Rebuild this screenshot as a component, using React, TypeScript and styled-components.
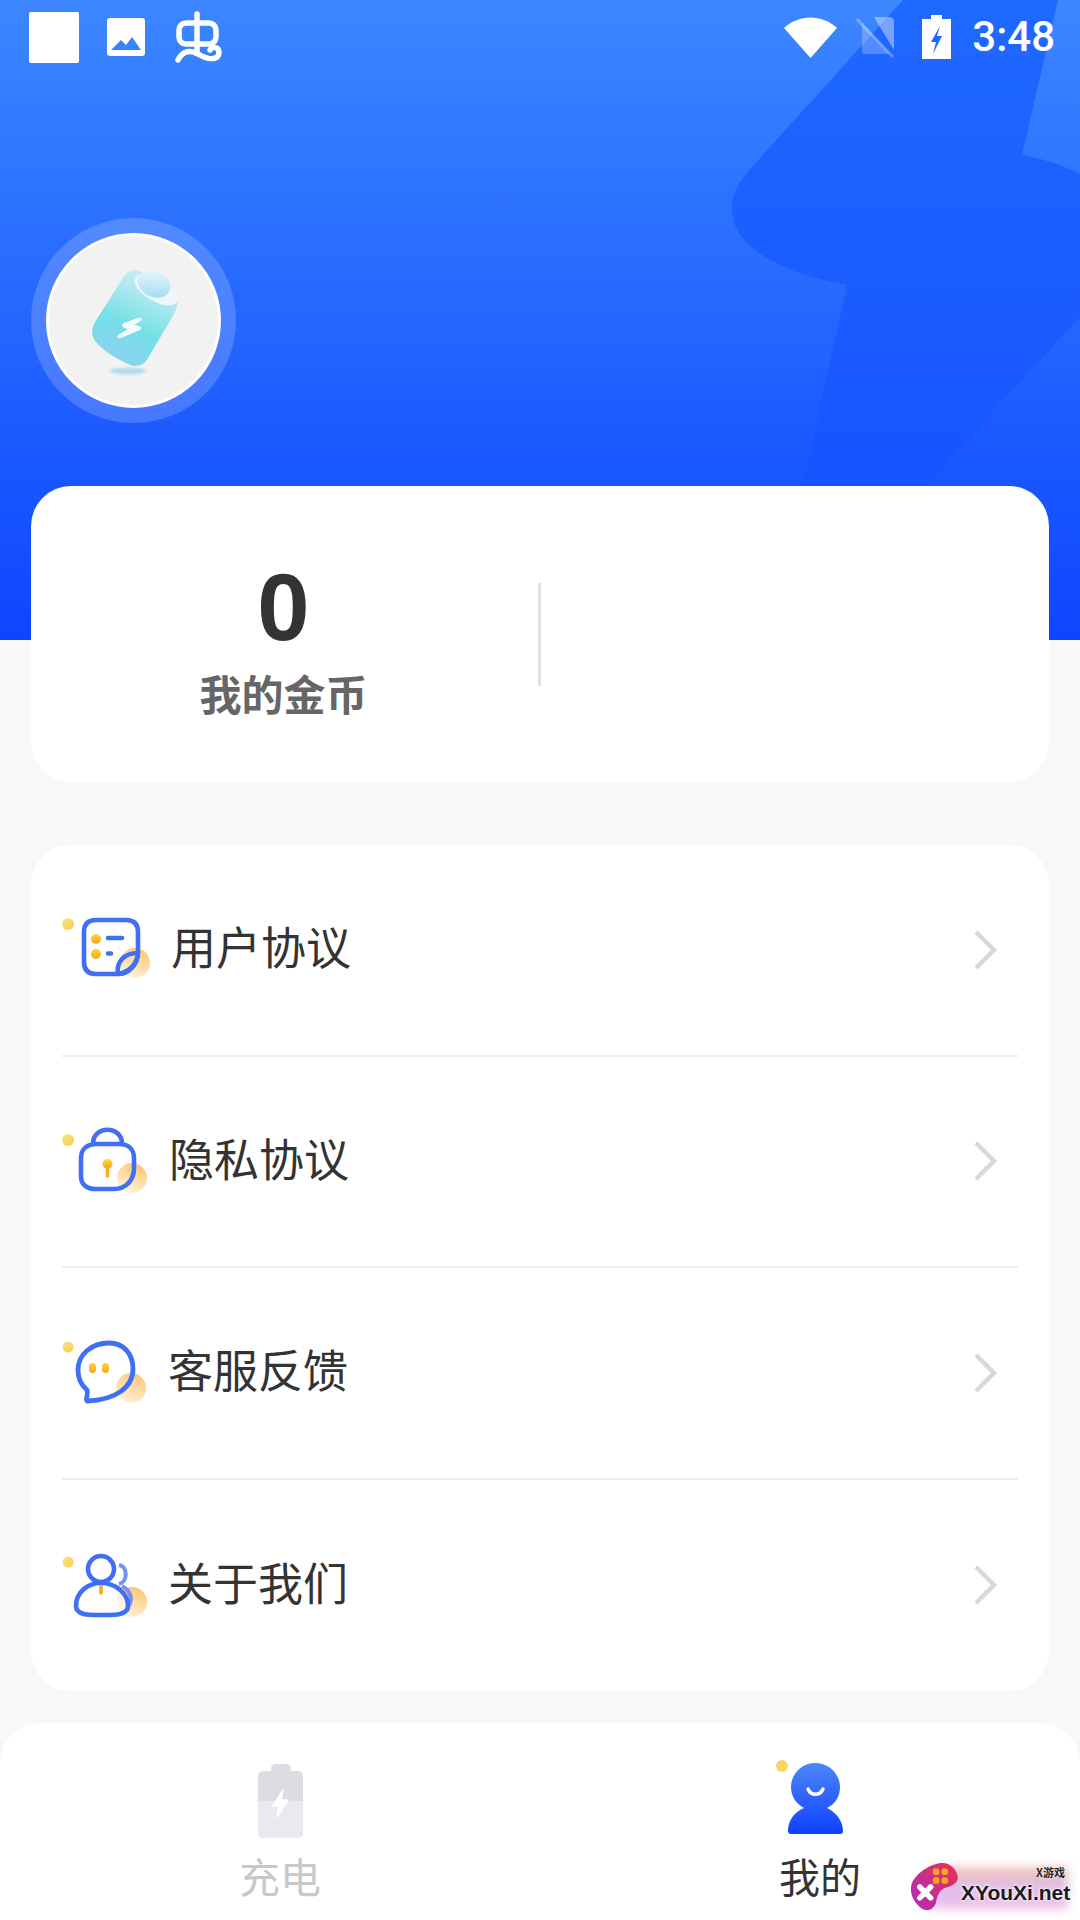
import React from 'react'
import styled, { createGlobalStyle } from 'styled-components'

const GlobalStyle = createGlobalStyle`
  html, body {
    margin: 0;
    padding: 0;
    background: #f7f8fa;
  }
  * {
    box-sizing: border-box;
  }
`

const cjk = `'Noto Sans CJK SC', 'Noto Sans', sans-serif`

const S = {
  Page: styled.div`
    position: relative;
    width: 1080px;
    height: 1920px;
    overflow: hidden;
    background: #f7f8fa;
    font-family: ${cjk};
  `,
  Hero: styled.header`
    position: relative;
    height: 640px;
    overflow: hidden;
    background: linear-gradient(180deg, #3c87ff 0%, #0e45ff 100%);
  `,
  HeroBolt: styled.svg`
    position: absolute;
    left: 0;
    top: 0;
  `,
  StatusBar: styled.div`
    position: relative;
    display: flex;
    align-items: center;
    height: 72px;
    padding: 2px 25px 0 29px;
  `,
  WhiteSquare: styled.div`
    width: 50px;
    height: 51px;
    border-radius: 2px;
    background: #fff;
    margin-right: 28px;
  `,
  StatusIcon: styled.svg<{ $after?: number }>`
    flex: none;
    margin-right: ${p => p.$after ?? 0}px;
  `,
  Spacer: styled.div`
    flex: 1;
  `,
  Clock: styled.span`
    font-family: Roboto, sans-serif;
    font-size: 42px;
    font-weight: 500;
    line-height: 1;
    color: #fff;
  `,
  AvatarRing: styled.div`
    position: relative;
    display: flex;
    align-items: center;
    justify-content: center;
    width: 205px;
    height: 205px;
    margin: 146px 0 0 31px;
    border-radius: 50%;
    background: rgba(255, 255, 255, 0.18);
  `,
  Avatar: styled.div`
    width: 175px;
    height: 175px;
    border: 3px solid #fff;
    border-radius: 50%;
    background: #f2f2f2;
    overflow: hidden;
  `,
  CoinCard: styled.section`
    position: relative;
    display: flex;
    align-items: center;
    height: 296px;
    margin: -154px 31px 0;
    border-radius: 40px;
    background: #fff;
  `,
  CoinCol: styled.div`
    display: flex;
    flex-direction: column;
    align-items: center;
    width: 505px;
    padding-top: 14px;
  `,
  CoinValue: styled.div`
    font-family: 'Liberation Sans', sans-serif;
    font-size: 94px;
    font-weight: 700;
    line-height: 94px;
    color: #333;
  `,
  CoinLabel: styled.div`
    margin-top: 10px;
    font-size: 42px;
    font-weight: 700;
    line-height: 56px;
    color: #666;
  `,
  CoinDivider: styled.div`
    width: 3px;
    height: 103px;
    margin-left: 2px;
    background: #e2e2e2;
  `,
  MenuCard: styled.section`
    margin: 63px 31px 0;
    padding: 0 31px;
    border-radius: 40px;
    background: #fff;
  `,
  MenuRow: styled.div`
    display: flex;
    align-items: center;
    height: 211.5px;
    border-bottom: 2px solid #eeeeee;

    &:last-child {
      border-bottom: 0;
    }
  `,
  MenuIcon: styled.svg`
    flex: none;
    margin-left: -12px;
  `,
  MenuText: styled.span<{ $inset: number }>`
    margin-left: ${p => p.$inset}px;
    padding-bottom: 7px;
    font-size: 45px;
    line-height: 60px;
    color: #333;
  `,
  Chevron: styled.svg`
    flex: none;
    margin-left: auto;
    margin-right: 20px;
  `,
  TabBar: styled.nav`
    display: grid;
    grid-template-columns: 560px 520px;
    height: 198px;
    margin-top: 32px;
    border-radius: 40px 40px 0 0;
    background: #fff;
  `,
  Tab: styled.div`
    display: flex;
    flex-direction: column;
    align-items: center;
    padding-top: 37px;
  `,
  TabIcon: styled.svg`
    display: block;
  `,
  TabLabel: styled.span<{ $active?: boolean }>`
    margin-top: 8px;
    font-size: 41px;
    line-height: 56px;
    color: ${p => (p.$active ? '#333' : '#c8c8c8')};
  `,
  Watermark: styled.div`
    position: absolute;
    left: 908px;
    top: 1860px;
    width: 170px;
    height: 56px;
  `,
  WatermarkGlow: styled.div`
    position: absolute;
    left: 22px;
    top: 7px;
    width: 138px;
    height: 42px;
    background: linear-gradient(180deg, #eeb6a8 0%, #d9b4ee 55%, #eeb4e0 100%);
    filter: blur(5px);
    opacity: 0.85;
  `,
  WatermarkPad: styled.svg`
    position: absolute;
    left: 2px;
    top: 2px;
  `,
  WatermarkName: styled.span`
    position: absolute;
    left: 53px;
    top: 20px;
    font-family: 'Liberation Sans', sans-serif;
    font-size: 21px;
    font-weight: 700;
    line-height: 26px;
    color: #1a1a1a;
    text-shadow: 0 0 3px #fff, 0 0 3px #fff;
  `,
  WatermarkTag: styled.span`
    position: absolute;
    left: 128px;
    top: 5px;
    font-size: 11px;
    font-weight: 700;
    line-height: 14px;
    color: #222;
    text-shadow: 0 0 2px #fff;
  `,
}

const BLUE = '#3f6ff5'
const LINE = 4.6

const Orange = () => (
  <defs>
    <linearGradient id="dot" x1="0" y1="0" x2="1" y2="1">
      <stop offset="0" stopColor="#fde68a" />
      <stop offset="1" stopColor="#f9c94e" />
    </linearGradient>
    <linearGradient id="blob" x1="0.8" y1="0" x2="0.3" y2="1">
      <stop offset="0" stopColor="#fbc56f" />
      <stop offset="1" stopColor="#fff3dd" />
    </linearGradient>
    <linearGradient id="mark" x1="0" y1="0" x2="0" y2="1">
      <stop offset="0" stopColor="#fdd33f" />
      <stop offset="1" stopColor="#f7a91d" />
    </linearGradient>
  </defs>
)

const AgreementGlyph = () => (
  <>
    <circle cx="18" cy="24" r="6" fill="url(#dot)" />
    <circle cx="85" cy="63" r="15" fill="url(#blob)" />
    <path
      d="M46 20H76C84 20 88 24 88 32V52C88 64 78 74 66 74H46C38 74 34 70 34 62V32C34 24 38 20 46 20Z"
      fill="none"
      stroke={BLUE}
      strokeWidth={LINE}
    />
    <path d="M68 74C66 62 74 53 88 53C87 66 78 74 68 74Z" fill="none" stroke={BLUE} strokeWidth={LINE} strokeLinejoin="round" />
    <circle cx="46" cy="39" r="5" fill="url(#mark)" />
    <circle cx="46" cy="54" r="5" fill="url(#mark)" />
    <path d="M58 38H72M58 53.500H61" stroke={BLUE} strokeWidth={LINE} strokeLinecap="round" />
  </>
)

const PrivacyGlyph = () => (
  <>
    <circle cx="18" cy="26" r="6" fill="url(#dot)" />
    <circle cx="82" cy="64" r="15" fill="url(#blob)" />
    <path d="M43 30C43 11 72 11 72 30" fill="none" stroke={BLUE} strokeWidth={LINE} />
    <path
      d="M47 30H69C78 30 84 35 84 44V54C84 66 76 75 64 75H46C37 75 31 71 31 62V44C31 35 37 30 47 30Z"
      fill="none"
      stroke={BLUE}
      strokeWidth={LINE}
    />
    <circle cx="57.500" cy="50" r="5" fill="url(#mark)" />
    <path d="M57.500 52V62" stroke="#f7b025" strokeWidth="3.6" strokeLinecap="round" />
  </>
)

const ServiceGlyph = () => (
  <>
    <circle cx="18" cy="22" r="5.500" fill="url(#dot)" />
    <circle cx="81" cy="63" r="15" fill="url(#blob)" />
    <path
      d="M59 18C74 18 83 29 83 44C83 62 66 75 37 76C35 73 39 69 37 65C31 60 28 53 28 45C28 29 42 18 59 18Z"
      fill="none"
      stroke={BLUE}
      strokeWidth="4.800"
      strokeLinejoin="round"
    />
    <rect x="39" y="38" width="7" height="10" rx="3.500" fill="url(#mark)" />
    <rect x="52" y="38" width="7" height="10" rx="3.500" fill="url(#mark)" />
  </>
)

const AboutGlyph = () => (
  <>
    <circle cx="18" cy="22" r="5.500" fill="url(#dot)" />
    <circle cx="82" cy="62" r="15" fill="url(#blob)" />
    <path d="M69 25C78 26 78 42 69 44" fill="none" stroke="#6f92f3" strokeWidth="4" />
    <path d="M72 46C80 50 84 60 78 66" fill="none" stroke="#6f92f3" strokeWidth="4" />
    <path d="M51 75C42 75 26 76 26 66C26 52 38 43 51 43C64 43 78 52 78 66C78 76 62 75 51 75Z" fill="#fff" fillOpacity="0.55" stroke={BLUE} strokeWidth={LINE} />
    <circle cx="51" cy="29" r="13" fill="#fff" stroke={BLUE} strokeWidth={LINE} />
    <path d="M51 47V53" stroke="#f7a91d" strokeWidth="3.6" strokeLinecap="round" />
  </>
)

const menu = [
  { label: '用户协议', inset: 1, top: 0, Glyph: AgreementGlyph },
  { label: '隐私协议', inset: -1, top: -3, Glyph: PrivacyGlyph },
  { label: '客服反馈', inset: -2, top: -2, Glyph: ServiceGlyph },
  { label: '关于我们', inset: -2, top: -5, Glyph: AboutGlyph },
]

export default function App() {
  return (
    <S.Page>
      <GlobalStyle />
      <S.Hero>
        <S.HeroBolt width="1080" height="640" viewBox="0 0 1080 640">
          <defs>
            <linearGradient id="bolt" gradientUnits="userSpaceOnUse" x1="0" y1="0" x2="0" y2="490">
              <stop offset="0" stopColor="#1f69ff" />
              <stop offset="0.55" stopColor="#1b5dff" />
              <stop offset="1" stopColor="#144cff" stopOpacity="0.3" />
            </linearGradient>
          </defs>
          <path
            d="M903 0H1058L1022 155C1050 160 1070 168 1080 175V317L957 450L900 520H795L847 285C790 275 732 250 732 210C732 190 740 180 760 158Z"
            fill="url(#bolt)"
          />
        </S.HeroBolt>
        <S.StatusBar>
          <S.WhiteSquare />
          <S.StatusIcon width="38" height="38" viewBox="0 0 38 38" $after={30}>
            <path
              fillRule="evenodd"
              d="M3 0H35C37 0 38 1 38 3V35C38 37 37 38 35 38H3C1 38 0 37 0 35V3C0 1 1 0 3 0ZM4 32H34L25 19L19 27L14 22Z"
              fill="#fff"
            />
          </S.StatusIcon>
          <S.StatusIcon width="47" height="52" viewBox="175 11 47 52">
            <g fill="none" stroke="#fff" strokeWidth="5.500" strokeLinecap="round" strokeLinejoin="round">
              <path d="M197 14V52" />
              <rect x="179" y="23" width="37" height="21" rx="7" />
              <path d="M178 60C183 50 191 50 198 54C206 59 219 62 219 52C219 47 212 46 210 50" />
            </g>
          </S.StatusIcon>
          <S.Spacer />
          <S.StatusIcon width="53" height="41" viewBox="0 0 53 41" $after={19}>
            <path d="M0 11C15 -3 38 -3 53 11L26.500 41Z" fill="#fff" />
          </S.StatusIcon>
          <S.StatusIcon width="40" height="42" viewBox="0 0 40 42" $after={26}>
            <path d="M18 1H33C36 1 38 3 38 5V34Z" fill="#fff" fillOpacity="0.4" />
            <path d="M6 7L34 38H9C7 38 6 37 6 35Z" fill="#fff" fillOpacity="0.24" />
            <path d="M1 3L37 41" stroke="#fff" strokeOpacity="0.28" strokeWidth="3" />
          </S.StatusIcon>
          <S.StatusIcon width="29" height="44" viewBox="0 0 29 44" $after={21}>
            <path
              fillRule="evenodd"
              d="M9 0H20V4H29V44H0V4H9ZM18 11L9 27H14L11 39L20 21H15Z"
              fill="#fff"
            />
          </S.StatusIcon>
          <S.Clock>3:48</S.Clock>
        </S.StatusBar>
        <S.AvatarRing>
          <S.Avatar>
            <svg width="169" height="169" viewBox="29 26 169 169">
              <defs>
                <linearGradient id="cell" x1="0.7" y1="0" x2="0.3" y2="1">
                  <stop offset="0" stopColor="#d6eef6" />
                  <stop offset="0.6" stopColor="#74e0e6" />
                  <stop offset="1" stopColor="#8fd0f0" />
                </linearGradient>
                <linearGradient id="nub" x1="0" y1="0" x2="0.6" y2="1">
                  <stop offset="0" stopColor="#f2f9fb" />
                  <stop offset="1" stopColor="#a8def0" />
                </linearGradient>
                <filter id="soft">
                  <feGaussianBlur stdDeviation="1.200" />
                </filter>
              </defs>
              <ellipse cx="108" cy="161" rx="18" ry="3.500" fill="#b5dcef" filter="url(#soft)" />
              <path
                d="M114 60C124 60 152 78 157 90C159 96 154 104 150 111L128 148C124 156 116 158 108 154C96 148 84 142 76 132C71 126 71 119 75 112L103 68C106 63 109 60 114 60Z"
                fill="url(#cell)"
              />
              <ellipse cx="136" cy="80" rx="24" ry="11" transform="rotate(30 136 80)" fill="#edf8fa" />
              <ellipse cx="134" cy="74" rx="17" ry="13" transform="rotate(25 134 74)" fill="url(#nub)" />
              <path
                d="M118 108L104 113Q100 115 104 118L108 119L98 125Q96 129 101 128L120 120Q123 117 119 116L114 115L122 110Q122 107 118 108Z"
                fill="#f6fcfd"
              />
            </svg>
          </S.Avatar>
        </S.AvatarRing>
      </S.Hero>

      <S.CoinCard>
        <S.CoinCol>
          <S.CoinValue>0</S.CoinValue>
          <S.CoinLabel>我的金币</S.CoinLabel>
        </S.CoinCol>
        <S.CoinDivider />
      </S.CoinCard>

      <S.MenuCard>
        {menu.map(({ label, inset, top, Glyph }) => (
          <S.MenuRow key={label}>
            <S.MenuIcon width="120" height="100" viewBox={`0 ${top} 120 100`}>
              <Orange />
              <Glyph />
            </S.MenuIcon>
            <S.MenuText $inset={inset}>{label}</S.MenuText>
            <S.Chevron width="25" height="42" viewBox="0 0 25 42">
              <path d="M3 3L21 21L3 39" fill="none" stroke="#d8d8dc" strokeWidth="4.500" />
            </S.Chevron>
          </S.MenuRow>
        ))}
      </S.MenuCard>

      <S.TabBar>
        <S.Tab>
          <S.TabIcon width="45" height="79" viewBox="0 -3 45 79">
            <path d="M13 6C13 3 15 1 18 1H28C31 1 33 3 33 6V8H39C43 8 45 10 45 14V69C45 73 43 75 39 75H6C2 75 0 73 0 69V14C0 10 2 8 6 8H13Z" fill="#dcdde3" />
            <path d="M0 38H45V69C45 73 43 75 39 75H6C2 75 0 73 0 69Z" fill="#e9eaef" />
            <path d="M25 27L15 43H21L19 54L30 37H23Z" fill="#fff" stroke="#fff" strokeWidth="1.500" strokeLinejoin="round" />
          </S.TabIcon>
          <S.TabLabel>充电</S.TabLabel>
        </S.Tab>
        <S.Tab>
          <S.TabIcon width="90" height="79" viewBox="775 1759 90 79">
            <defs>
              <linearGradient id="me" x1="0" y1="0" x2="0" y2="1">
                <stop offset="0" stopColor="#4c86f7" />
                <stop offset="1" stopColor="#0e42ff" />
              </linearGradient>
            </defs>
            <circle cx="782" cy="1765" r="6" fill="#fbd45c" />
            <path
              d="M815 1762C829 1762 840 1773 840 1786C840 1796 835 1803 827 1807C836 1811 843 1820 843 1830C843 1832 842 1833 840 1833H791C789 1833 788 1832 788 1830C788 1820 794 1811 804 1807C796 1803 791 1795 791 1786C791 1773 802 1762 815 1762Z"
              fill="url(#me)"
            />
            <path d="M808 1788C811 1795 820 1795 823 1788" fill="none" stroke="#fff" strokeWidth="3.500" strokeLinecap="round" />
          </S.TabIcon>
          <S.TabLabel $active>我的</S.TabLabel>
        </S.Tab>
      </S.TabBar>

      <S.Watermark>
        <S.WatermarkGlow />
        <S.WatermarkPad width="50" height="50" viewBox="0 0 46 46">
          <defs>
            <linearGradient id="pad" x1="1" y1="0" x2="0" y2="1">
              <stop offset="0" stopColor="#e8304f" />
              <stop offset="1" stopColor="#b02cc0" />
            </linearGradient>
          </defs>
          <path d="M28 1C36 0 43 6 44 14C44 20 38 22 32 24C26 27 25 32 24 37C22 44 16 46 11 43C4 38 0 30 1 23C2 13 16 3 28 1Z" fill="url(#pad)" />
          <path d="M9 23L19 33M19 23L9 33" stroke="#fff" strokeWidth="5" strokeLinecap="round" />
          <g fill="#f6a623">
            <rect x="21" y="6" width="6" height="6" rx="2" />
            <rect x="29" y="6" width="6" height="6" rx="2" />
            <rect x="21" y="14" width="6" height="6" rx="2" />
            <rect x="29" y="14" width="6" height="6" rx="2" />
          </g>
        </S.WatermarkPad>
        <S.WatermarkName>XYouXi.net</S.WatermarkName>
        <S.WatermarkTag>X游戏</S.WatermarkTag>
      </S.Watermark>
    </S.Page>
  )
}
